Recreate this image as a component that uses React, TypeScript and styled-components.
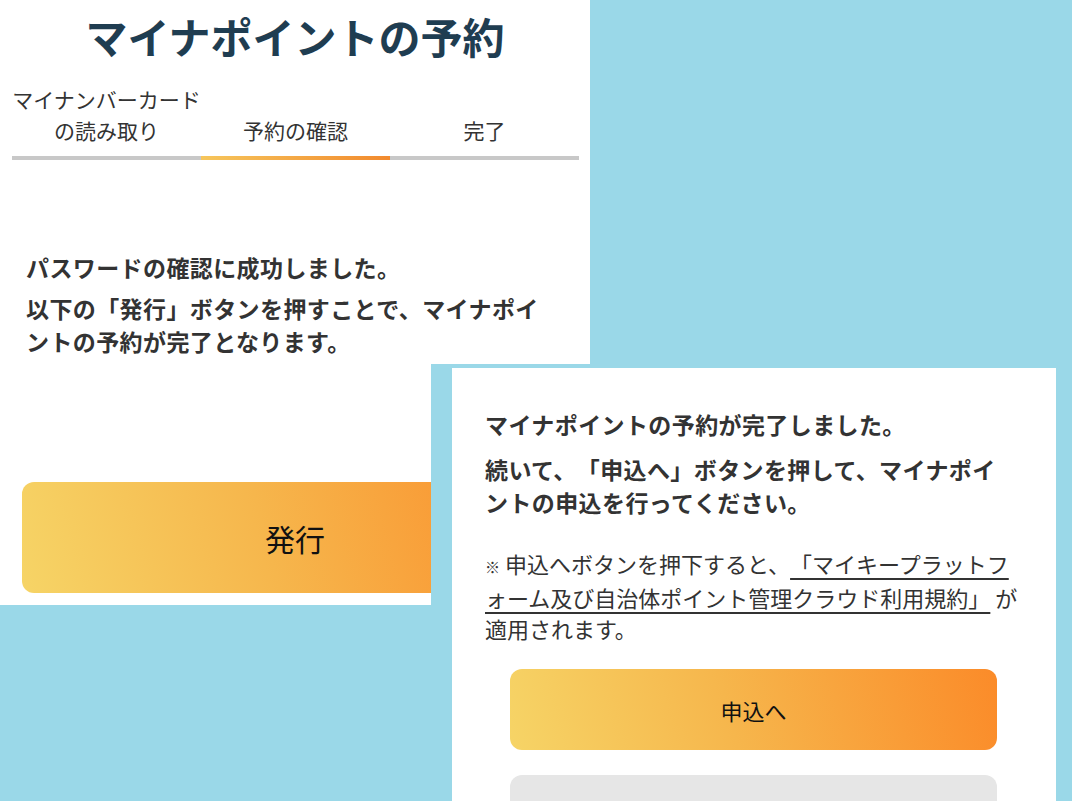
import styled, { createGlobalStyle } from 'styled-components'

const GlobalStyle = createGlobalStyle`
  html, body {
    margin: 0;
    padding: 0;
    background: #9ad8e8;
  }
  body {
    font-family: 'Noto Sans CJK JP', 'Noto Sans', sans-serif;
    color: #333;
    text-spacing-trim: space-all;
  }
`

const steps = [
  { label: 'マイナンバーカードの読み取り', active: false },
  { label: '予約の確認', active: true },
  { label: '完了', active: false },
]

export default function App() {
  return (
    <>
      <GlobalStyle />
      <Canvas>
        <ReservePanel>
          <Title>マイナポイントの予約</Title>
          <Steps>
            {steps.map(step => (
              <Step key={step.label}>
                <StepLabel>{step.label}</StepLabel>
                <StepBar $active={step.active} />
              </Step>
            ))}
          </Steps>
          <Message>
            <Paragraph>パスワードの確認に成功しました。</Paragraph>
            <Paragraph>
              以下の「発行」ボタンを押すことで、マイナポイ<br />ントの予約が完了となります。
            </Paragraph>
          </Message>
          <IssueButton>発行</IssueButton>
        </ReservePanel>

        <DoneFrame>
          <DonePanel>
            <Paragraph>マイナポイントの予約が完了しました。</Paragraph>
            <Paragraph>
              続いて、「申込へ」ボタンを押して、マイナポイ<br />ントの申込を行ってください。
            </Paragraph>
            <Note>
              <Mark>※</Mark> 申込へボタンを押下すると、
              <TermsLink>
                「マイキープラットフ<br />ォーム及び自治体ポイント管理クラウド利用規約」
              </TermsLink>{' '}
              が<br />適用されます。
            </Note>
            <ApplyButton>申込へ</ApplyButton>
            <GhostButton />
          </DonePanel>
        </DoneFrame>
      </Canvas>
    </>
  )
}

const Canvas = styled.div`
  position: relative;
  width: 1072px;
  height: 801px;
  overflow: hidden;
  background: #9ad8e8;
`

const ReservePanel = styled.section`
  position: absolute;
  left: 0;
  top: 0;
  width: 590px;
  height: 605px;
  background: #fff;
  display: flex;
  flex-direction: column;
`

const Title = styled.h1`
  margin: 8px 0 0;
  font-size: 42px;
  line-height: 56px;
  font-weight: 700;
  text-align: center;
  color: #1f3d51;
`

const Steps = styled.div`
  display: grid;
  grid-template-columns: repeat(3, 1fr);
  margin: 20px 11px 0 12px;
`

const Step = styled.div`
  display: flex;
  flex-direction: column;
  justify-content: flex-end;
  gap: 10px;
`

const StepLabel = styled.div`
  font-size: 21px;
  line-height: 31px;
  text-align: center;
  color: #333;
`

const StepBar = styled.div<{ $active: boolean }>`
  height: 4px;
  background: ${({ $active }) =>
    $active ? 'linear-gradient(90deg, #f6c65c, #f28a2e)' : '#c8c8c8'};
`

const Message = styled.div`
  margin: 91px 0 0 26px;
  display: flex;
  flex-direction: column;
  gap: 8px;
`

const Paragraph = styled.p`
  margin: 0;
  font-size: 23px;
  line-height: 33px;
  font-weight: 700;
  letter-spacing: 0.4px;
  color: #333;
  white-space: nowrap;
`

const OrangeButton = styled.button`
  border: none;
  border-radius: 12px;
  background: linear-gradient(75deg, #f6d466 0%, #f6b64c 45%, #fb8b29 100%);
  color: #111;
  font-family: inherit;
  cursor: pointer;
`

const IssueButton = styled(OrangeButton)`
  margin: 124px 22px 0;
  height: 111px;
  font-size: 30px;
`

const DoneFrame = styled.section`
  position: absolute;
  left: 431px;
  top: 364px;
  right: 0;
  bottom: 0;
  background: #9ad8e8;
  padding: 4px 16px 0 21px;
  display: flex;
`

const DonePanel = styled.div`
  flex: 1;
  background: #fff;
  padding: 40px 33px 0;
  display: flex;
  flex-direction: column;
  gap: 12px;
`

const Note = styled.p`
  margin: 17px 0 0;
  font-size: 22px;
  line-height: 31px;
  color: #333;
  white-space: nowrap;
`

const Mark = styled.span`
  font-size: 15px;
`

const TermsLink = styled.a`
  color: #333;
  text-decoration: underline;
  text-underline-offset: 5px;
  text-decoration-thickness: 2px;
`

const ApplyButton = styled(OrangeButton)`
  margin: 13px 26px 0 25px;
  height: 81px;
  flex-shrink: 0;
  font-size: 22px;
`

const GhostButton = styled.div`
  margin: 13px 26px 0 25px;
  height: 81px;
  flex-shrink: 0;
  border-radius: 12px;
  background: #e6e6e6;
`
